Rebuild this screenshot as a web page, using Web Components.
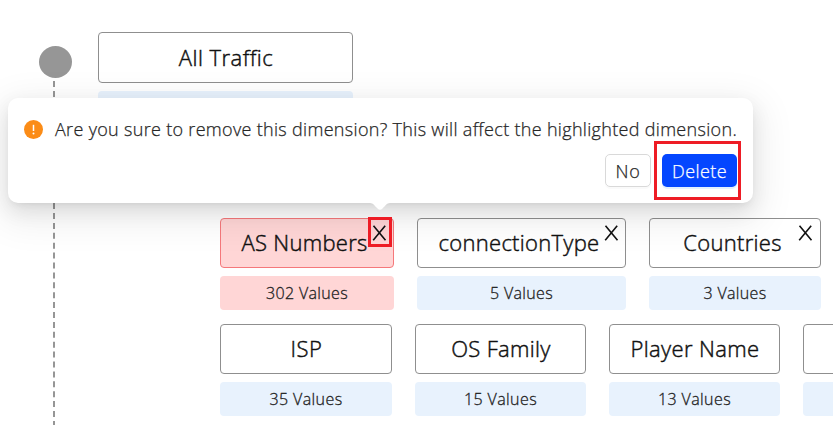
<!DOCTYPE html>
<html lang="en"><head><meta charset="utf-8"><title>Dimensions</title>
<style>
html,body{margin:0;height:100%;overflow:hidden;background:#fff}
body{font-family:"Open Sans","Noto Sans",sans-serif;color:#111}
</style></head><body>
<dimension-board></dimension-board>
<script>
class FitText extends HTMLElement{
  connectedCallback(){
    this.attachShadow({mode:'open'}).innerHTML=`<style>:host{display:inline-block;white-space:nowrap}span{display:inline-block}</style><span><slot></slot></span>`;
    const w=+this.getAttribute('width');
    if(!w)return;
    const s=this.shadowRoot.querySelector('span'),n=this.textContent.length;
    const sp=(w-s.getBoundingClientRect().width)/n;
    s.style.letterSpacing=sp+'px';
  }
}
customElements.define('fit-text',FitText);

class DimensionCard extends HTMLElement{
  connectedCallback(){
    const a=n=>this.getAttribute(n)||'';
    this.attachShadow({mode:'open'}).innerHTML=`<style>
    :host{display:flex;flex-direction:column;gap:8px;flex:none;width:${a('size')}px}
    .title{box-sizing:border-box;height:${a('tall')||50}px;border:1px solid #8f8f8f;border-radius:4px;display:flex;align-items:center;justify-content:center;font-size:22px;font-weight:300;-webkit-text-stroke:.45px currentColor;color:#111;line-height:30px;padding-bottom:2px;padding-left:1px;position:relative}
    .value{height:34px;border-radius:4px;background:#e8f2fd;display:flex;align-items:center;justify-content:center;font-size:16px;font-weight:300;-webkit-text-stroke:.3px currentColor;color:#222}
    :host([closable]) .title{padding-right:6px}
    :host([danger]) .title{background:#ffd6d6;border-color:#f5787b}
    :host([danger]) .value{background:#ffd6d6}
    svg{position:absolute;right:${a('inset')||6}px;top:5.5px;width:15px;height:16px}
    </style>
    <div class="title"><fit-text width="${a('fit')}">${a('name')}</fit-text>${this.hasAttribute('closable')?'<svg viewBox="0 0 15 16"><path d="M1.5 .8 13.5 15.2M13.2 .8 1.2 15.2" stroke="#111" stroke-width="1.6" fill="none"/></svg>':''}</div>
    <div class="value"><fit-text width="${a('vfit')}">${a('value')}</fit-text></div>`;
  }
}
customElements.define('dimension-card',DimensionCard);

class TimelineRail extends HTMLElement{
  connectedCallback(){
    this.attachShadow({mode:'open'}).innerHTML=`<style>:host{display:block;width:98px;flex:none;padding-top:46px;box-sizing:border-box}svg{display:block}</style>
    <svg width="98" height="379"><ellipse cx="55.5" cy="16" rx="16.5" ry="16" fill="#969696"/><path d="M54 35V100" stroke="#969696" stroke-width="2" stroke-dasharray="6 4"/><path d="M54 147.2V379" stroke="#969696" stroke-width="2" stroke-dasharray="6 3.9"/></svg>`;
  }
}
customElements.define('timeline-rail',TimelineRail);

class ConfirmPopover extends HTMLElement{
  connectedCallback(){
    this.attachShadow({mode:'open'}).innerHTML=`<style>
    :host{position:absolute;left:8px;top:98px;width:745px;height:105px;box-sizing:border-box;border-radius:10px;background:#fff;padding:16px;box-shadow:0 8px 20px rgba(0,0,0,.09),0 4px 8px -5px rgba(0,0,0,.13),0 11px 36px 10px rgba(0,0,0,.065);color:#262626;font-size:18px;font-weight:300;-webkit-text-stroke:.25px currentColor}
    .message{display:flex;align-items:center;gap:12px;height:30px}
    .message svg{flex:none}
    .actions{display:flex;justify-content:flex-end;gap:11px;margin-top:10px}
    .btn{height:33px;box-sizing:border-box;border-radius:5px;display:flex;align-items:center;justify-content:center;font-size:18px}
    .no{width:46px;border:1px solid #d9d9d9;box-shadow:0 2px 0 rgba(0,0,0,.02)}
    .delete{width:75px;background:#0446ff;color:#fff;box-shadow:0 2px 0 #e3f0ff;position:relative}
    .mark{position:absolute;left:-8px;top:-13px;width:81px;height:53px;border:3px solid #ee1c25}
    .arrow{position:absolute;left:362px;top:105px}
    </style>
    <div class="message"><svg width="19" height="19"><circle cx="9.5" cy="9.5" r="9.5" fill="#fb8c17"/><path d="M9.5 4.8V11" stroke="#fff" stroke-width="1.5"/><circle cx="9.5" cy="13.4" r="1" fill="#fff"/></svg><fit-text width="682">Are you sure to remove this dimension? This will affect the highlighted dimension.</fit-text></div>
    <div class="actions"><div class="btn no"><fit-text width="25">No</fit-text></div><div class="btn delete"><fit-text width="55">Delete</fit-text><div class="mark"></div></div></div>
    <svg class="arrow" width="20" height="8"><path d="M0 0C3 0 5 3 7.5 5.6Q10 8 12.5 5.6C15 3 17 0 20 0Z" fill="#fff"/></svg>`;
  }
}
customElements.define('confirm-popover',ConfirmPopover);

class DimensionBoard extends HTMLElement{
  connectedCallback(){
    this.attachShadow({mode:'open'}).innerHTML=`<style>
    :host{display:flex;width:833px;height:425px;position:relative;overflow:hidden}
    .content{flex:1;min-width:0;padding-top:32px}
    .row{display:flex;gap:23px;margin-left:122px}
    .r1{margin-top:93px}.r2{margin-top:14px}
    .close-mark{position:absolute;left:368px;top:217px;width:18px;height:24px;border:3px solid #ee1c25}
    </style>
    <timeline-rail></timeline-rail>
    <div class="content">
      <dimension-card size="255" tall="51" name="All Traffic" fit="94.5"></dimension-card>
      <div class="row r1">
        <dimension-card size="174" closable danger name="AS Numbers" fit="126" value="302 Values" vfit="82"></dimension-card>
        <dimension-card size="209" closable name="connectionType" fit="161" value="5 Values" vfit="63"></dimension-card>
        <dimension-card size="172" closable inset="7" name="Countries" fit="98.5" value="3 Values" vfit="63"></dimension-card>
      </div>
      <div class="row r2">
        <dimension-card size="172" name="ISP" fit="32" value="35 Values" vfit="73"></dimension-card>
        <dimension-card size="171" name="OS Family" fit="99.5" value="15 Values" vfit="73"></dimension-card>
        <dimension-card size="171" name="Player Name" fit="129" value="13 Values" vfit="73"></dimension-card>
        <dimension-card size="171"></dimension-card>
      </div>
    </div>
    <confirm-popover></confirm-popover><div class="close-mark"></div>`;
  }
}
customElements.define('dimension-board',DimensionBoard);
</script></body></html>
